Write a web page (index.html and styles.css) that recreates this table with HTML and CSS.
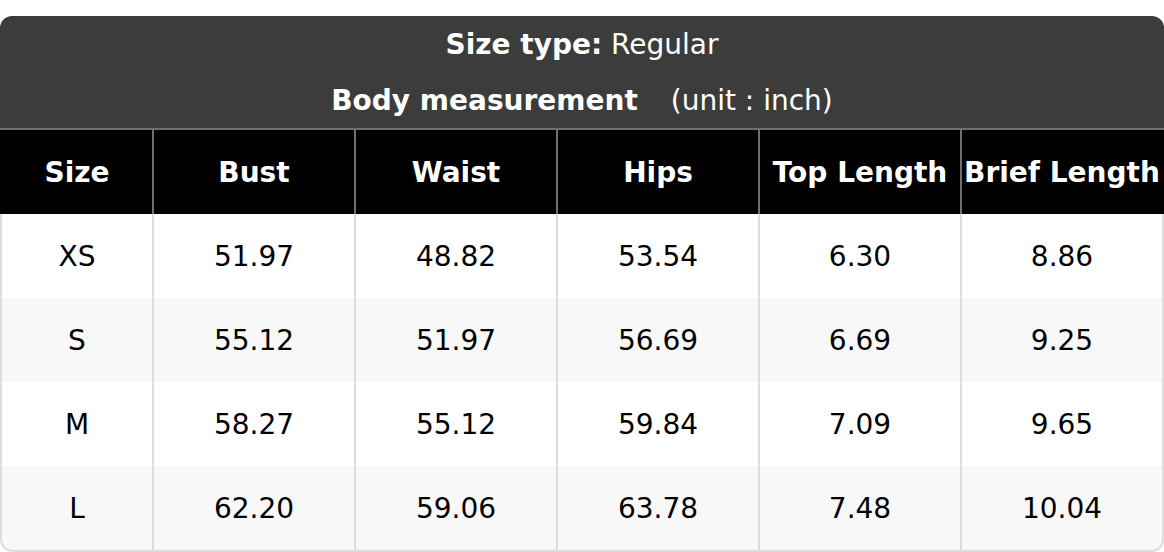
FILE: index.html
```html
<!DOCTYPE html>
<html>
<head>
<meta charset="utf-8">
<link rel="stylesheet" href="styles.css">
</head>
<body>
<div class="chart">
  <div class="title">
    <div class="title-line"><span><b>Size type:</b> Regular</span></div>
    <div class="title-line"><span><b>Body measurement</b><span class="unit">(unit : inch)</span></span></div>
  </div>
  <div class="row head">
    <div class="cell">Size</div>
    <div class="cell">Bust</div>
    <div class="cell">Waist</div>
    <div class="cell">Hips</div>
    <div class="cell">Top Length</div>
    <div class="cell">Brief Length</div>
  </div>
  <div class="row">
    <div class="cell">XS</div>
    <div class="cell">51.97</div>
    <div class="cell">48.82</div>
    <div class="cell">53.54</div>
    <div class="cell">6.30</div>
    <div class="cell">8.86</div>
  </div>
  <div class="row alt">
    <div class="cell">S</div>
    <div class="cell">55.12</div>
    <div class="cell">51.97</div>
    <div class="cell">56.69</div>
    <div class="cell">6.69</div>
    <div class="cell">9.25</div>
  </div>
  <div class="row">
    <div class="cell">M</div>
    <div class="cell">58.27</div>
    <div class="cell">55.12</div>
    <div class="cell">59.84</div>
    <div class="cell">7.09</div>
    <div class="cell">9.65</div>
  </div>
  <div class="row alt last">
    <div class="cell">L</div>
    <div class="cell">62.20</div>
    <div class="cell">59.06</div>
    <div class="cell">63.78</div>
    <div class="cell">7.48</div>
    <div class="cell">10.04</div>
  </div>
</div>
</body>
</html>
```
FILE: styles.css
```css
html, body {
  margin: 0;
  padding: 0;
  background: #fff;
}
body {
  padding-top: 16px;
  font-family: "DejaVu Sans", sans-serif;
  font-size: 28px;
  color: #000;
}
.chart {
  width: 1164px;
  border-radius: 12px;
  overflow: hidden;
  box-sizing: border-box;
}
.title {
  background: #3c3c3c;
  color: #fff;
}
.title-line {
  height: 56px;
  display: flex;
  align-items: center;
  justify-content: center;
}
.title-line b {
  font-weight: bold;
}
.unit {
  margin-left: 33px;
}
.row {
  display: grid;
  grid-template-columns: 152px 202px 202px 202px 202px 204px;
  height: 84px;
  background: #fff;
}
.row.alt {
  background: #f8f8f8;
}
.cell {
  display: flex;
  align-items: center;
  justify-content: center;
  box-sizing: border-box;
  border-left: 2px solid #dddddd;
  white-space: nowrap;
}
.row .cell:last-child {
  border-right: 2px solid #dddddd;
}
.row.last {
  height: 86px;
}
.row.last .cell {
  border-bottom: 2px solid #dddddd;
}
.row.last .cell:first-child {
  border-bottom-left-radius: 12px;
}
.row.last .cell:last-child {
  border-bottom-right-radius: 12px;
}
.row.head {
  background: #000;
  color: #fff;
  font-weight: bold;
  border-top: 2px solid #707070;
  height: 84px;
}
.row.head .cell {
  border-left-color: #707070;
}
.row.head .cell:first-child {
  border-left-color: #000;
}
.row.head .cell:last-child {
  border-right-color: #000;
}
```
